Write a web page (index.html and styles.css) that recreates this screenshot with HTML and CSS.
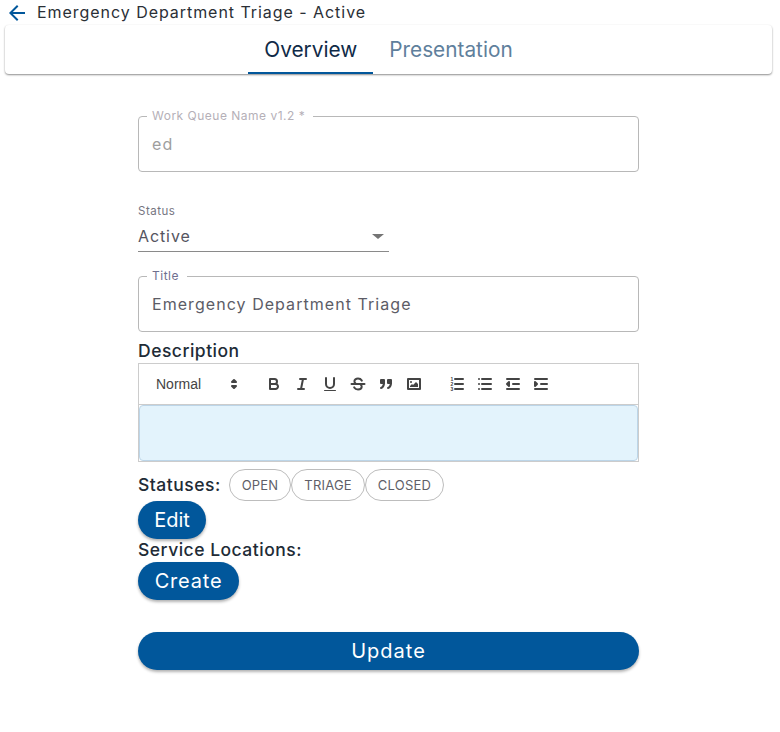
FILE: index.html
```html
<!DOCTYPE html>
<html lang="en">

<head>
    <meta charset="UTF-8">
    <meta name="viewport" content="width=device-width, initial-scale=1.0">
    <title>Emergency Department Triage - Active</title>
    <link rel="stylesheet" href="styles.css">
</head>

<body>
    <header class="top-bar">
        <svg class="back-icon" viewBox="0 0 24 24"><path d="M20 11H7.83l5.59-5.59L12 4l-8 8 8 8 1.41-1.41L7.83 13H20v-2z"/></svg>
        <span class="page-title">Emergency Department Triage - Active</span>
    </header>

    <nav class="tabs">
        <a class="tab tab-active">Overview</a>
        <a class="tab">Presentation</a>
    </nav>

    <form class="form">
        <fieldset class="field field-disabled">
            <legend>Work Queue Name v1.2 *</legend>
            <input type="text" value="ed" disabled>
        </fieldset>

        <div class="select-field">
            <label>Status</label>
            <div class="select-value">
                <span>Active</span>
                <span class="select-arrow"></span>
            </div>
        </div>

        <fieldset class="field field-title">
            <legend>Title</legend>
            <input type="text" value="Emergency Department Triage">
        </fieldset>

        <div class="section-label desc-label">Description</div>
        <div class="editor">
            <div class="toolbar">
                <span class="picker">
                    Normal
                    <svg viewBox="0 0 18 18"><polygon points="7 11 9 13 11 11 7 11"/><polygon points="7 7 9 5 11 7 7 7"/></svg>
                </span>
                <span class="tool-group">
                    <svg class="tool" viewBox="0 0 18 18"><path d="M5,4H9.5A2.5,2.5,0,0,1,12,6.5v0A2.5,2.5,0,0,1,9.5,9H5V4Z"/><path d="M5,9h5.5A2.5,2.5,0,0,1,13,11.5v0A2.5,2.5,0,0,1,10.5,14H5V9Z"/></svg>
                    <svg class="tool" viewBox="0 0 18 18"><line x1="7" x2="13" y1="4" y2="4"/><line x1="5" x2="11" y1="14" y2="14"/><line x1="8" x2="10" y1="14" y2="4"/></svg>
                    <svg class="tool" viewBox="0 0 18 18"><path d="M5,3V9a4,4,0,0,0,4,4h0a4,4,0,0,0,4-4V3"/><rect class="solid" x="3" y="15" width="12" height="1" rx="0.5"/></svg>
                    <svg class="tool" viewBox="0 0 18 18"><path d="M12.8 5.6C12 4.3 10.6 3.6 9 3.6 6.9 3.6 5.4 4.8 5.4 6.3 5.4 7.2 5.8 7.9 6.6 8.5"/><path d="M5.2 12.4C6 13.7 7.4 14.4 9 14.4 11.2 14.4 12.7 13.2 12.7 11.7 12.7 10.9 12.4 10.2 11.8 9.7"/><line x1="2.5" x2="15.5" y1="9" y2="9"/></svg>
                    <svg class="tool" viewBox="0 0 18 18"><rect class="solid-line" x="4" y="5" width="3" height="3"/><rect class="solid-line" x="11" y="5" width="3" height="3"/><path class="solid-line" d="M7,8c0,4.031-3,5-3,5"/><path class="solid-line" d="M14,8c0,4.031-3,5-3,5"/></svg>
                    <svg class="tool" viewBox="0 0 18 18"><rect x="3" y="4" width="12" height="10"/><circle class="solid" cx="6" cy="7" r="1"/><polygon class="solid" points="5 12 5 11 7 9 8 10 11 7 13 9 13 12 5 12"/></svg>
                </span>
                <span class="tool-group">
                    <svg class="tool" viewBox="0 0 18 18"><line x1="7" x2="15" y1="4" y2="4"/><line x1="7" x2="15" y1="9" y2="9"/><line x1="7" x2="15" y1="14" y2="14"/><text x="2.5" y="6">1</text><text x="2.5" y="11">2</text><text x="2.5" y="16">3</text></svg>
                    <svg class="tool" viewBox="0 0 18 18"><line x1="6" x2="15" y1="4" y2="4"/><line x1="6" x2="15" y1="9" y2="9"/><line x1="6" x2="15" y1="14" y2="14"/><line class="dot" x1="3" x2="3" y1="4" y2="4"/><line class="dot" x1="3" x2="3" y1="9" y2="9"/><line class="dot" x1="3" x2="3" y1="14" y2="14"/></svg>
                    <svg class="tool" viewBox="0 0 18 18"><line x1="3" x2="15" y1="14" y2="14"/><line x1="3" x2="15" y1="4" y2="4"/><line x1="9" x2="15" y1="9" y2="9"/><polygon class="solid-line" points="5 7 5 11 3 9 5 7"/></svg>
                    <svg class="tool" viewBox="0 0 18 18"><line x1="3" x2="15" y1="14" y2="14"/><line x1="3" x2="15" y1="4" y2="4"/><line x1="9" x2="15" y1="9" y2="9"/><polygon class="solid-line" points="3 7 3 11 5 9 3 7"/></svg>
                </span>
            </div>
            <div class="editor-body"></div>
        </div>

        <div class="status-row">
            <span class="section-label status-label">Statuses:</span>
            <span class="chips">
                <span class="chip">OPEN</span>
                <span class="chip">TRIAGE</span>
                <span class="chip">CLOSED</span>
            </span>
        </div>
        <button type="button" class="btn btn-edit">Edit</button>
        <div class="section-label locations-label">Service Locations:</div>
        <button type="button" class="btn btn-create">Create</button>
        <button type="button" class="btn btn-wide">Update</button>
    </form>
</body>

</html>
```

FILE: styles.css
```css
body {
    font-family: Inter, "Liberation Sans", sans-serif;
    background-color: #fff;
    color: #212b36;
    margin: 0;
    padding: 0;
    height: 732px;
    overflow: hidden;
}

.top-bar {
    display: flex;
    align-items: center;
    height: 25px;
    padding-left: 5px;
}

.back-icon {
    width: 24px;
    height: 24px;
    fill: #01579b;
}

.page-title {
    margin-left: 8px;
    padding-bottom: 2px;
    font-size: 16px;
    letter-spacing: 0.95px;
    color: #2a2f36;
}

.tabs {
    display: flex;
    justify-content: center;
    height: 49px;
    margin: 0 8px 0 5px;
    border-radius: 4px;
    box-shadow: 0 1px 2px rgba(0, 0, 0, 0.45);
}

.tab {
    box-sizing: border-box;
    height: 49px;
    padding: 12px 16px 0;
    font-size: 20.8px;
    color: #5f7f9c;
}

.tab-active {
    color: #0f2a47;
    border-bottom: 2px solid #01579b;
}

.form {
    width: 501px;
    margin: 42px 0 0 138px;
}

.field {
    box-sizing: border-box;
    height: 56px;
    margin: 0;
    padding: 0 13px;
    border: 1px solid #b8b8b8;
    border-radius: 4px;
    min-width: 0;
}

.field legend {
    height: 0;
    margin-left: -5px;
    padding: 0 8px 1px 5px;
    line-height: 0;
    font-size: 12px;
    letter-spacing: 0.5px;
    color: #6f6f8f;
}

.field input {
    display: block;
    box-sizing: border-box;
    width: 100%;
    height: 53px;
    padding: 0;
    border: none;
    outline: none;
    background: none;
    font-family: inherit;
    font-size: 16px;
    letter-spacing: 1.05px;
    color: #5c5c66;
}

.field-disabled legend {
    color: #b5b0b8;
}

.field-disabled input {
    color: #9e9e9e;
}

.field-title {
    margin-top: 24px;
}

.select-field {
    width: 251px;
    margin-top: 32px;
}

.select-field label {
    display: block;
    height: 14px;
    line-height: 14px;
    font-size: 11.5px;
    letter-spacing: 0.5px;
    color: #75757f;
}

.select-value {
    display: flex;
    align-items: center;
    justify-content: space-between;
    box-sizing: border-box;
    height: 34px;
    padding: 2px 5px 0 0;
    border-bottom: 1px solid #8a8a8a;
    font-size: 16px;
    letter-spacing: 0.9px;
    color: #55555f;
}

.select-arrow {
    width: 0;
    height: 0;
    border-left: 6px solid transparent;
    border-right: 6px solid transparent;
    border-top: 5px solid #757575;
    margin-top: 2px;
}

.section-label {
    font-size: 17.5px;
    font-weight: 500;
    letter-spacing: 0.5px;
    color: #212b36;
}

.desc-label {
    height: 31px;
    line-height: 38px;
}

.editor {
    box-sizing: border-box;
    height: 99px;
    border: 1px solid #ccc;
}

.toolbar {
    display: flex;
    align-items: center;
    box-sizing: border-box;
    height: 41px;
    padding: 0 8px;
    border-bottom: 1px solid #ccc;
}

.picker {
    display: flex;
    align-items: center;
    justify-content: space-between;
    box-sizing: border-box;
    width: 98px;
    margin-right: 15px;
    padding-left: 9px;
    font-family: "Liberation Sans", Arial, sans-serif;
    font-size: 14px;
    font-weight: 500;
    color: #444;
}

.picker svg {
    width: 18px;
    height: 18px;
    margin-right: 2px;
    fill: #444;
    stroke: #444;
    stroke-width: 2;
    stroke-linejoin: round;
}

.tool-group {
    display: flex;
    margin-right: 15px;
}

.tool {
    box-sizing: border-box;
    width: 28px;
    height: 24px;
    padding: 3px 5px;
    fill: none;
    stroke: #444;
    stroke-width: 2;
    stroke-linecap: round;
    stroke-linejoin: round;
}

.tool .solid {
    fill: #444;
    stroke: none;
}

.tool .solid-line {
    fill: #444;
}

.tool .dot {
    stroke-width: 2;
}

.tool text {
    font-family: "Liberation Sans", Arial, sans-serif;
    font-size: 5px;
    font-weight: 700;
    fill: #444;
    stroke: none;
}

.editor-body {
    box-sizing: border-box;
    height: 56px;
    background-color: #e3f3fc;
    border: 1px solid #bcd5e8;
    border-radius: 4px;
}

.status-row {
    display: flex;
    align-items: center;
    margin-top: 7px;
}

.status-label {
    padding-bottom: 2px;
}

.chips {
    display: flex;
    margin-left: 8px;
}

.chip {
    display: flex;
    align-items: center;
    box-sizing: border-box;
    height: 32px;
    padding: 0 12px;
    border: 1px solid #bdbdbd;
    border-radius: 16px;
    font-size: 13px;
    letter-spacing: 0.2px;
    color: #5f5f68;
}

.btn {
    display: block;
    box-sizing: border-box;
    height: 38px;
    padding: 0;
    border: none;
    border-radius: 19px;
    background-color: #01579b;
    box-shadow: 0 2px 3px rgba(0, 0, 0, 0.3);
    font-family: inherit;
    font-size: 20px;
    color: #fff;
}

.btn-edit {
    width: 68px;
}

.btn-create {
    width: 101px;
    letter-spacing: 0.8px;
}

.locations-label {
    height: 23px;
    line-height: 22px;
}

.btn-wide {
    width: 100%;
    margin-top: 32px;
    letter-spacing: 1px;
}
```
